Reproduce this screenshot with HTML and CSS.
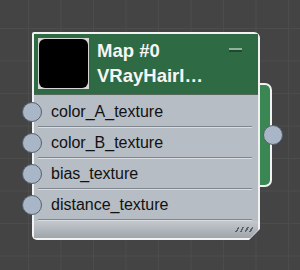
FILE: index.html
```html
<!DOCTYPE html>
<html lang="en">
<head>
    <meta charset="UTF-8">
    <title>Map #0 node</title>
    <link rel="stylesheet" href="styles.css">
</head>
<body>
    <div class="canvas">
        <div class="graph">
            <!-- output tab sits behind the node -->
            <div class="out-tab"></div>
            <div class="node">
                <div class="node-inner">
                    <div class="node-header">
                        <div class="thumb"><div class="thumb-inner"></div></div>
                        <div class="title">
                            <div class="title-line">Map #0</div>
                            <div class="title-line">VRayHairI…</div>
                        </div>
                        <div class="min-btn"></div>
                    </div>
                    <div class="node-body">
                        <div class="slot">color_A_texture</div>
                        <div class="sep"></div>
                        <div class="slot">color_B_texture</div>
                        <div class="sep"></div>
                        <div class="slot">bias_texture</div>
                        <div class="sep"></div>
                        <div class="slot">distance_texture</div>
                        <div class="sep"></div>
                    </div>
                    <div class="node-footer">
                        <div class="grip"></div>
                    </div>
                </div>
            </div>
            <div class="socket socket-in s1"></div>
            <div class="socket socket-in s2"></div>
            <div class="socket socket-in s3"></div>
            <div class="socket socket-in s4"></div>
            <div class="socket socket-out"></div>
        </div>
    </div>
</body>
</html>
```

FILE: styles.css
```css
html, body {
    margin: 0;
    height: 100%;
}

body {
    font-family: 'Liberation Sans', Arial, sans-serif;
    background-color: #444444;
    background-image:
        linear-gradient(to right, #4c4c4c 1px, transparent 1px),
        linear-gradient(to bottom, #4c4c4c 1px, transparent 1px);
    background-size: 32.5px 32.5px;
    background-position: 28px 28px;
    overflow: hidden;
}

.canvas {
    padding: 32px 0 0 32px;
}

.graph {
    position: relative;
    width: 228px;
    height: 208px;
}

.node {
    position: relative;
    z-index: 1;
    width: 228px;
    height: 208px;
    box-sizing: border-box;
    padding: 2px;
    background: #f2f2f2;
    border-radius: 2px 6px 0 5px;
    clip-path: polygon(0 0, 100% 0, 100% calc(100% - 11px), calc(100% - 11px) 100%, 0 100%);
}

.node-inner {
    height: 100%;
    display: flex;
    flex-direction: column;
    background: #b6bdc4;
    border-radius: 1px 4px 0 3px;
    clip-path: polygon(0 0, 100% 0, 100% calc(100% - 8px), calc(100% - 8px) 100%, 0 100%);
}

.node-header {
    display: flex;
    align-items: flex-start;
    height: 61px;
    box-sizing: border-box;
    padding: 4px;
    background: #2e6a43;
    border-bottom: 1px solid #56675c;
}

.thumb {
    width: 51px;
    height: 51px;
    box-sizing: border-box;
    padding: 1px;
    background: #d6d6d6;
    flex-shrink: 0;
}

.thumb-inner {
    height: 100%;
    background: #000;
    border-radius: 6px;
}

.title {
    margin-left: 8px;
    color: #f6f6f6;
    font-size: 18.5px;
    font-weight: bold;
    line-height: 25px;
}

.title-line {
    white-space: nowrap;
}

.min-btn {
    width: 13px;
    height: 2px;
    margin: 10px 12px 0 auto;
    background: #8fb39b;
    border-bottom: 2px solid #1f4a2e;
}

.node-body {
    padding-top: 2px;
}

.slot {
    height: 29px;
    line-height: 30px;
    padding-left: 17px;
    font-size: 16px;
    color: #111;
}

.sep {
    margin: 0 6px 0 4px;
    border-top: 1px solid #7f868d;
    border-bottom: 1px solid #d9dde1;
}

.node-footer {
    flex: 1;
    display: flex;
    justify-content: flex-end;
    padding: 6px 5px 0 0;
    background: linear-gradient(#c3c8cd, #9ea5ac);
}

.grip {
    width: 18px;
    height: 5px;
    background: repeating-linear-gradient(-60deg, transparent 0 2px, #5a6066 2px 3.5px, transparent 3.5px 4px);
}

.out-tab {
    position: absolute;
    z-index: 0;
    left: 216px;
    top: 51px;
    width: 24px;
    height: 104px;
    box-sizing: border-box;
    background: #3a8754;
    border: 2px solid #f2f2f2;
    border-left: none;
    border-radius: 0 7px 7px 0;
}

.socket {
    position: absolute;
    z-index: 2;
    width: 20px;
    height: 20px;
    box-sizing: border-box;
    border-radius: 50%;
    background: #a8b6c7;
    border: 1px solid #55606b;
}

.socket-in {
    left: -10px;
}

.s1 { top: 70px; }
.s2 { top: 101px; }
.s3 { top: 132px; }
.s4 { top: 163px; }

.socket-out {
    left: 231px;
    top: 93px;
}
```
